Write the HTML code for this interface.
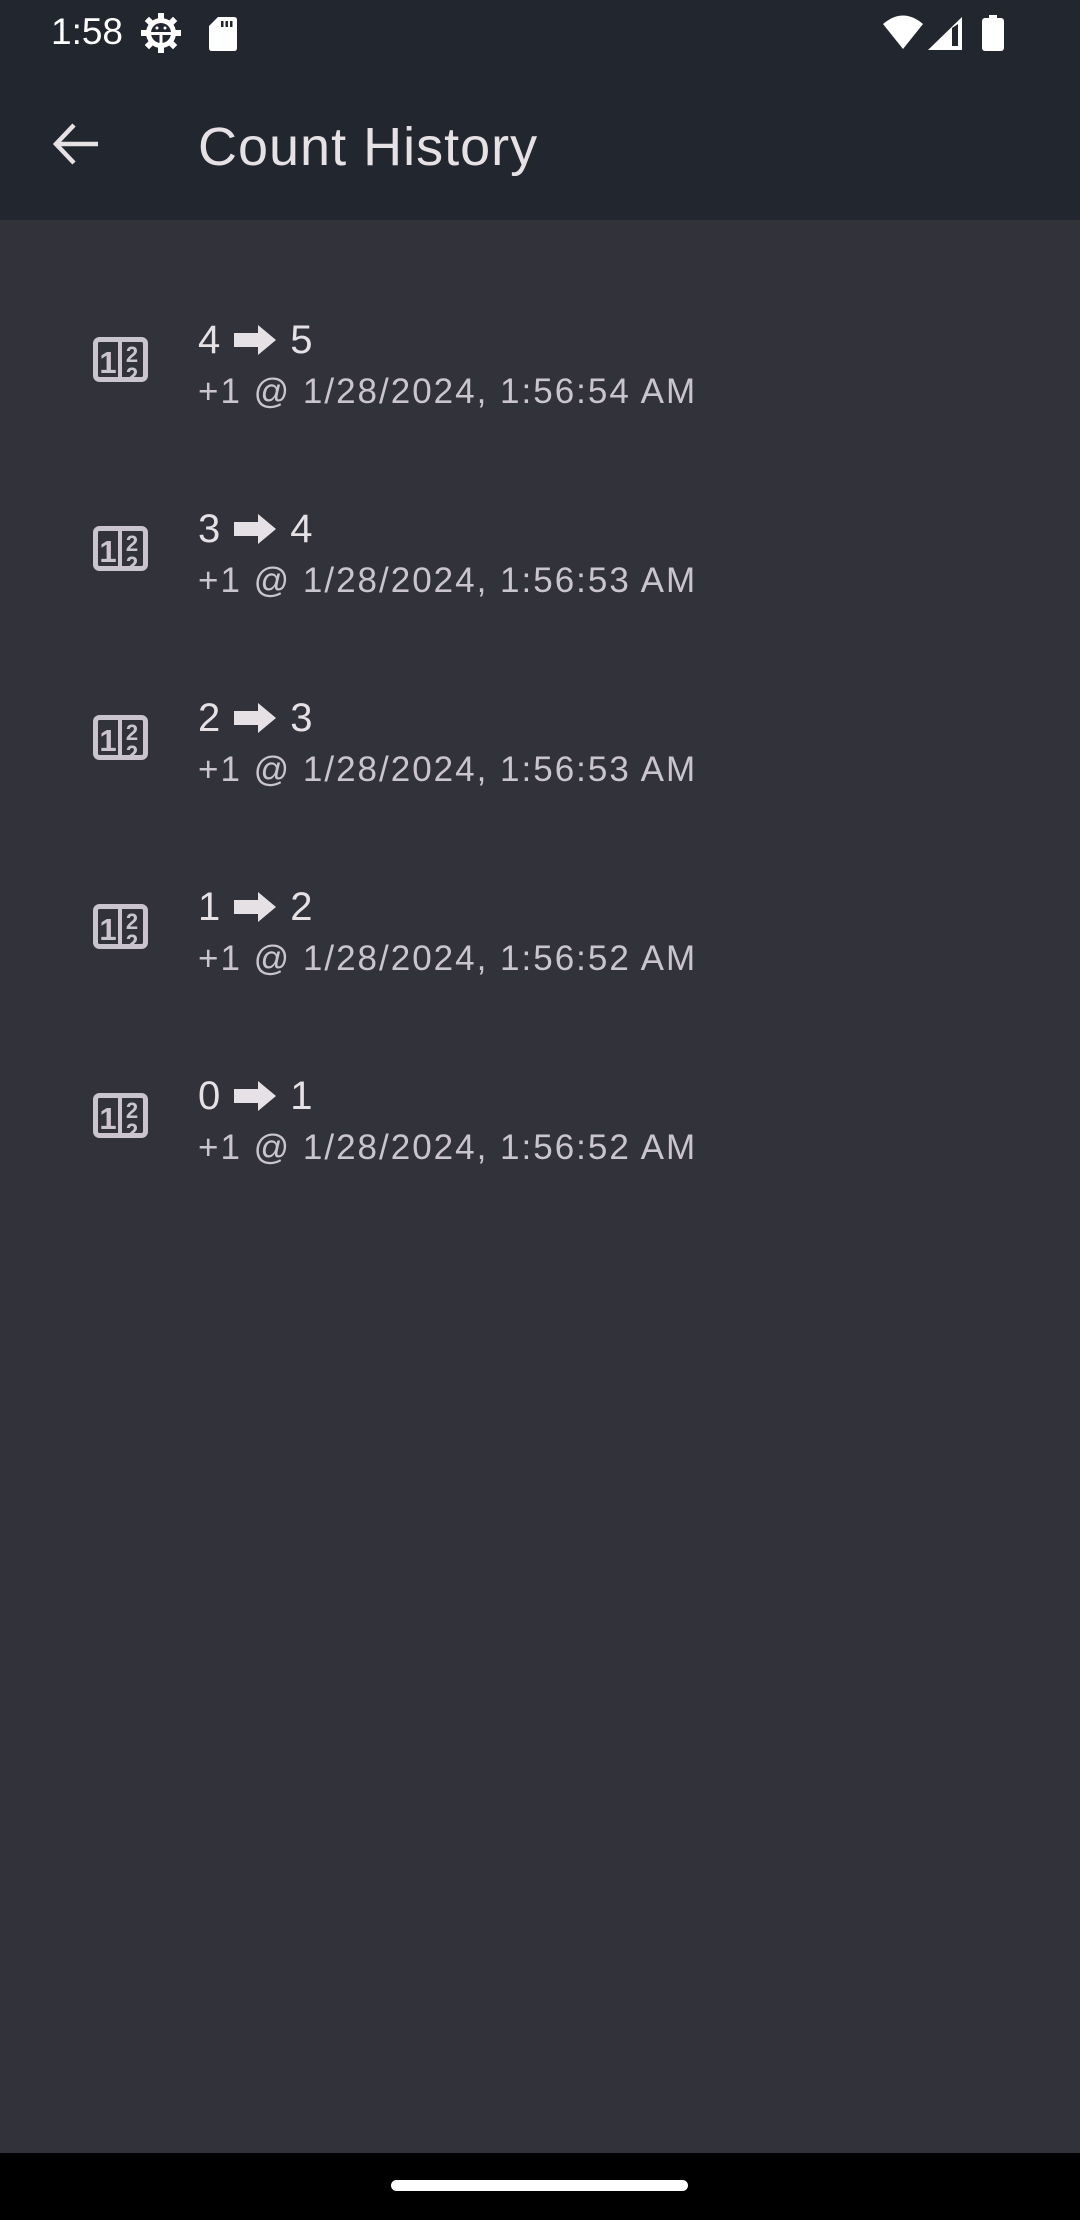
<!DOCTYPE html>
<html><head><meta charset="utf-8">
<style>
*{margin:0;padding:0;box-sizing:border-box}
html,body{width:1080px;height:2220px;overflow:hidden;background:#32333a;font-family:"Liberation Sans",Roboto,sans-serif}
.abs{position:absolute}
#top{left:0;top:0;width:1080px;height:220px;background:#22262e}
.t{color:#e6e1e5;font-size:40px;left:198px;line-height:40px;height:40px;white-space:nowrap}
.t svg{vertical-align:middle;margin:0 14px 0 14px;position:relative;top:-2px}
.s{color:#cac4d0;font-size:35px;left:198px;line-height:1;white-space:nowrap;letter-spacing:2px}
#nav{left:0;top:2153px;width:1080px;height:67px;background:#000}
</style></head><body>
<div id="top" class="abs"></div>
<div class="abs" style="left:51px;top:13px;color:#fff;font-size:37px;line-height:1">1:58</div>
<svg class="abs" style="left:140px;top:12px" width="42" height="42" viewBox="0 0 42 42">
<g fill="#fff"><circle cx="21" cy="21" r="15"/>
<g transform="translate(21 21)"><rect x="-3" y="-20" width="6" height="7"/><rect x="-3" y="-20" width="6" height="7" transform="rotate(45)"/><rect x="-3" y="-20" width="6" height="7" transform="rotate(90)"/><rect x="-3" y="-20" width="6" height="7" transform="rotate(135)"/><rect x="-3" y="-20" width="6" height="7" transform="rotate(180)"/><rect x="-3" y="-20" width="6" height="7" transform="rotate(225)"/><rect x="-3" y="-20" width="6" height="7" transform="rotate(270)"/><rect x="-3" y="-20" width="6" height="7" transform="rotate(315)"/></g></g>
<circle cx="21" cy="21" r="10" fill="#22262e"/><rect x="10" y="20" width="22" height="3" fill="#fff"/><rect x="19.5" y="20" width="3" height="11" fill="#fff"/><circle cx="17" cy="16" r="1.5" fill="#fff"/><circle cx="25" cy="16" r="1.5" fill="#fff"/></svg>
<svg class="abs" style="left:209px;top:17px" width="28" height="34" viewBox="0 0 28 34"><path d="M9 0H25Q28 0 28 3V31Q28 34 25 34H3Q0 34 0 31V9Z" fill="#fff"/><rect x="12" y="4" width="2.5" height="6" fill="#22262e"/><rect x="16.5" y="4" width="2.5" height="6" fill="#22262e"/><rect x="21" y="4" width="2.5" height="6" fill="#22262e"/></svg>
<svg class="abs" style="left:883px;top:15px" width="40" height="35" viewBox="0 0 40 35"><path d="M0 9Q20 -8 40 9L20 34Z" fill="#fff"/></svg>
<svg class="abs" style="left:928px;top:17px" width="34" height="33" viewBox="0 0 34 33"><path d="M34 0V33H0Z" fill="#fff"/><path d="M24 11V29H30V7Z" fill="#22262e"/></svg>
<svg class="abs" style="left:982px;top:15px" width="22" height="36" viewBox="0 0 22 36"><rect x="7" y="0" width="8" height="4" fill="#fff"/><rect x="0" y="3" width="22" height="33" rx="3" fill="#fff"/></svg>

<svg class="abs" style="left:52px;top:122px" width="48" height="44" viewBox="0 0 48 44"><path d="M46 22H4M22 3L4 22L22 41" stroke="#e6e1e5" stroke-width="4.5" fill="none"/></svg>
<div class="abs" style="left:198px;top:120px;color:#e6e1e5;font-size:54px;line-height:1;letter-spacing:1px">Count History</div>

<div class="abs" style="left:93px;top:337px"><svg width="55" height="45" viewBox="0 0 55 45"><rect x="2.5" y="2.5" width="50" height="40" rx="4" fill="none" stroke="#cac4d0" stroke-width="5"/><rect x="25" y="4" width="4" height="37" fill="#cac4d0"/><text x="15" y="36" font-size="31" font-weight="bold" fill="#cac4d0" font-family="Liberation Sans" text-anchor="middle">1</text><text x="39" y="25" font-size="22" font-weight="bold" fill="#cac4d0" font-family="Liberation Sans" text-anchor="middle">2</text><text x="39" y="46" font-size="22" font-weight="bold" fill="#cac4d0" font-family="Liberation Sans" text-anchor="middle">2</text></svg></div>
<div class="abs t" style="top:320px">4<svg width="42" height="30" viewBox="0 0 42 30"><path d="M0 8H24V0L42 15L24 30V22H0Z" fill="#e6e1e5"/></svg>5</div>
<div class="abs s" style="top:374px">+1 @ 1/28/2024, 1:56:54 AM</div>

<div class="abs" style="left:93px;top:526px"><svg width="55" height="45" viewBox="0 0 55 45"><rect x="2.5" y="2.5" width="50" height="40" rx="4" fill="none" stroke="#cac4d0" stroke-width="5"/><rect x="25" y="4" width="4" height="37" fill="#cac4d0"/><text x="15" y="36" font-size="31" font-weight="bold" fill="#cac4d0" font-family="Liberation Sans" text-anchor="middle">1</text><text x="39" y="25" font-size="22" font-weight="bold" fill="#cac4d0" font-family="Liberation Sans" text-anchor="middle">2</text><text x="39" y="46" font-size="22" font-weight="bold" fill="#cac4d0" font-family="Liberation Sans" text-anchor="middle">2</text></svg></div>
<div class="abs t" style="top:509px">3<svg width="42" height="30" viewBox="0 0 42 30"><path d="M0 8H24V0L42 15L24 30V22H0Z" fill="#e6e1e5"/></svg>4</div>
<div class="abs s" style="top:563px">+1 @ 1/28/2024, 1:56:53 AM</div>

<div class="abs" style="left:93px;top:715px"><svg width="55" height="45" viewBox="0 0 55 45"><rect x="2.5" y="2.5" width="50" height="40" rx="4" fill="none" stroke="#cac4d0" stroke-width="5"/><rect x="25" y="4" width="4" height="37" fill="#cac4d0"/><text x="15" y="36" font-size="31" font-weight="bold" fill="#cac4d0" font-family="Liberation Sans" text-anchor="middle">1</text><text x="39" y="25" font-size="22" font-weight="bold" fill="#cac4d0" font-family="Liberation Sans" text-anchor="middle">2</text><text x="39" y="46" font-size="22" font-weight="bold" fill="#cac4d0" font-family="Liberation Sans" text-anchor="middle">2</text></svg></div>
<div class="abs t" style="top:698px">2<svg width="42" height="30" viewBox="0 0 42 30"><path d="M0 8H24V0L42 15L24 30V22H0Z" fill="#e6e1e5"/></svg>3</div>
<div class="abs s" style="top:752px">+1 @ 1/28/2024, 1:56:53 AM</div>

<div class="abs" style="left:93px;top:904px"><svg width="55" height="45" viewBox="0 0 55 45"><rect x="2.5" y="2.5" width="50" height="40" rx="4" fill="none" stroke="#cac4d0" stroke-width="5"/><rect x="25" y="4" width="4" height="37" fill="#cac4d0"/><text x="15" y="36" font-size="31" font-weight="bold" fill="#cac4d0" font-family="Liberation Sans" text-anchor="middle">1</text><text x="39" y="25" font-size="22" font-weight="bold" fill="#cac4d0" font-family="Liberation Sans" text-anchor="middle">2</text><text x="39" y="46" font-size="22" font-weight="bold" fill="#cac4d0" font-family="Liberation Sans" text-anchor="middle">2</text></svg></div>
<div class="abs t" style="top:887px">1<svg width="42" height="30" viewBox="0 0 42 30"><path d="M0 8H24V0L42 15L24 30V22H0Z" fill="#e6e1e5"/></svg>2</div>
<div class="abs s" style="top:941px">+1 @ 1/28/2024, 1:56:52 AM</div>

<div class="abs" style="left:93px;top:1093px"><svg width="55" height="45" viewBox="0 0 55 45"><rect x="2.5" y="2.5" width="50" height="40" rx="4" fill="none" stroke="#cac4d0" stroke-width="5"/><rect x="25" y="4" width="4" height="37" fill="#cac4d0"/><text x="15" y="36" font-size="31" font-weight="bold" fill="#cac4d0" font-family="Liberation Sans" text-anchor="middle">1</text><text x="39" y="25" font-size="22" font-weight="bold" fill="#cac4d0" font-family="Liberation Sans" text-anchor="middle">2</text><text x="39" y="46" font-size="22" font-weight="bold" fill="#cac4d0" font-family="Liberation Sans" text-anchor="middle">2</text></svg></div>
<div class="abs t" style="top:1076px">0<svg width="42" height="30" viewBox="0 0 42 30"><path d="M0 8H24V0L42 15L24 30V22H0Z" fill="#e6e1e5"/></svg>1</div>
<div class="abs s" style="top:1130px">+1 @ 1/28/2024, 1:56:52 AM</div>

<div id="nav" class="abs"></div>
<div class="abs" style="left:391px;top:2180px;width:297px;height:11px;border-radius:6px;background:#fff"></div>
</body></html>
